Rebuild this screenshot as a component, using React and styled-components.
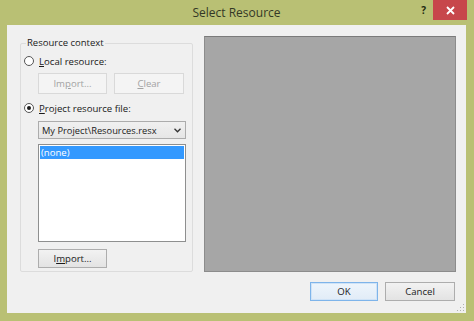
import styled, { createGlobalStyle } from "styled-components";

const Global = createGlobalStyle`
  html, body { margin: 0; padding: 0; background: #b7bf72; }
  body { font-family: "Open Sans", "Noto Sans", "DejaVu Sans", sans-serif; }
`;

const Frame = styled.div`
  width: 474px;
  height: 321px;
  box-sizing: border-box;
  background: #b9c074;
  padding: 0 8px 8px 7px;
  display: flex;
  flex-direction: column;
`;

const TitleBar = styled.div`
  height: 25px;
  display: flex;
  align-items: center;
  justify-content: center;
  position: relative;
  color: #343826;
  font-size: 12px;
`;

const Help = styled.span`
  position: absolute;
  right: 40px;
  top: 3px;
  font-size: 10px;
  font-weight: bold;
  color: #1e2a10;
`;

const Close = styled.div`
  position: absolute;
  right: -1px;
  top: 0;
  width: 34px;
  height: 20px;
  background: #c7474b;
  display: flex;
  align-items: center;
  justify-content: center;
`;

const Body = styled.div`
  flex: 1;
  background: #f0f0f0;
  padding: 11px 10px 12px 13px;
  display: flex;
  flex-direction: column;
  position: relative;
`;

const Main = styled.div`
  display: flex;
  height: 236px;
  gap: 11px;
`;

const Group = styled.fieldset`
  margin: 0;
  width: 172px;
  box-sizing: border-box;
  height: 236px;
  border: 1px solid #dcdcdc;
  border-radius: 2px;
  padding: 0 6px 0 3px;
  display: flex;
  flex-direction: column;
`;

const Legend = styled.legend`
  font-size: 9.5px;
  line-height: 14px;
  color: #1a1a1a;
  padding: 0 1px;
  margin-left: 2px;
`;

const Radio = styled.label`
  display: flex;
  align-items: center;
  gap: 5px;
  font-size: 9.6px;
  color: #1a1a1a;
  height: 14px;
  margin-top: ${(p) => p.$top}px;
`;

const Circle = styled.span`
  width: 10px;
  height: 10px;
  box-sizing: border-box;
  border-radius: 50%;
  border: 1px solid #555;
  background: #fff;
  display: flex;
  align-items: center;
  justify-content: center;
  &::after {
    content: "";
    width: 4px;
    height: 4px;
    border-radius: 50%;
    background: ${(p) => (p.$on ? "#1a1a1a" : "transparent")};
  }
`;

const Indent = styled.div`
  padding-left: 14px;
  display: flex;
  gap: 7px;
  margin-top: ${(p) => p.$top || 0}px;
`;

const Button = styled.button`
  width: ${(p) => p.$w || 69}px;
  height: ${(p) => p.$h || 20}px;
  box-sizing: border-box;
  padding: 0;
  font-family: inherit;
  font-size: 9.6px;
  color: ${(p) => (p.disabled ? "#a3a3a3" : "#1a1a1a")};
  border: 1px solid ${(p) => (p.disabled ? "#d9d9d9" : p.$default ? "#7eb4ea" : "#adadad")};
  background: ${(p) =>
    p.disabled
      ? "#f4f4f4"
      : p.$default
      ? "linear-gradient(#eef5fc, #e1ecf7)"
      : "linear-gradient(#f2f2f2, #e3e3e3)"};
  box-shadow: ${(p) => (p.$default ? "inset 0 0 0 1px #cfe3f7" : "none")};
`;

const U = styled.span`
  text-decoration: underline;
`;

const Combo = styled.div`
  width: 148px;
  height: 18px;
  box-sizing: border-box;
  border: 1px solid #acacac;
  background: linear-gradient(#f0f0f0, #e6e6e6);
  display: flex;
  align-items: center;
  justify-content: space-between;
  padding: 0 4px 0 3px;
  font-size: 9.3px;
  color: #1a1a1a;
`;

const List = styled.div`
  width: 148px;
  height: 98px;
  box-sizing: border-box;
  border: 1px solid #8e8f8f;
  background: #fff;
  padding: 1px;
`;

const Item = styled.div`
  height: 13px;
  line-height: 13px;
  font-size: 9.6px;
  padding-left: 1px;
  color: ${(p) => (p.$sel ? "#fff" : "#1a1a1a")};
  background: ${(p) => (p.$sel ? "#3399ff" : "transparent")};
`;

const Preview = styled.div`
  flex: 1;
  background: #a6a6a6;
  border: 1px solid #8c8c8c;
  border-top-color: #7a7a7a;
`;

const Footer = styled.div`
  margin-top: 10px;
  display: flex;
  justify-content: flex-end;
  gap: 7px;
  padding-right: 1px;
`;

const Grip = styled.svg`
  position: absolute;
  right: 1px;
  bottom: 1px;
`;

function App() {
  return (
    <>
      <Global />
      <Frame>
        <TitleBar>
          Select Resource
          <Help>?</Help>
          <Close>
            <svg width="9" height="9" viewBox="0 0 9 9">
              <path d="M1 1 L8 8 M8 1 L1 8" stroke="#fff" strokeWidth="1.8" />
            </svg>
          </Close>
        </TitleBar>
        <Body>
          <Main>
            <Group>
              <Legend>Resource context</Legend>
              <Radio $top={4}>
                <Circle />
                <span>
                  <U>L</U>ocal resource:
                </span>
              </Radio>
              <Indent $top={5}>
                <Button disabled $w={69} $h={21}>
                  Im<U>p</U>ort...
                </Button>
                <Button disabled $w={70} $h={21}>
                  <U>C</U>lear
                </Button>
              </Indent>
              <Radio $top={7}>
                <Circle $on />
                <span>
                  <U>P</U>roject resource file:
                </span>
              </Radio>
              <Indent $top={6}>
                <Combo>
                  <span>My Project\Resources.resx</span>
                  <svg width="7" height="5" viewBox="0 0 7 5">
                    <path d="M0.5 0.8 L3.5 3.8 L6.5 0.8" fill="none" stroke="#333" strokeWidth="1.3" />
                  </svg>
                </Combo>
              </Indent>
              <Indent $top={5}>
                <List>
                  <Item $sel>(none)</Item>
                </List>
              </Indent>
              <Indent $top={7}>
                <Button $w={69} $h={19}>
                  I<U>m</U>port...
                </Button>
              </Indent>
            </Group>
            <Preview />
          </Main>
          <Footer>
            <Button $default $w={68} $h={19}>
              OK
            </Button>
            <Button $w={70} $h={19}>
              Cancel
            </Button>
          </Footer>
          <Grip width="8" height="8" viewBox="0 0 8 8">
            <rect x="6" y="0" width="1" height="1" fill="#b0b0b0" />
            <rect x="3" y="3" width="1" height="1" fill="#b0b0b0" />
            <rect x="6" y="3" width="1" height="1" fill="#b0b0b0" />
            <rect x="0" y="6" width="1" height="1" fill="#b0b0b0" />
            <rect x="3" y="6" width="1" height="1" fill="#b0b0b0" />
            <rect x="6" y="6" width="1" height="1" fill="#b0b0b0" />
          </Grip>
        </Body>
      </Frame>
    </>
  );
}

export default App;
